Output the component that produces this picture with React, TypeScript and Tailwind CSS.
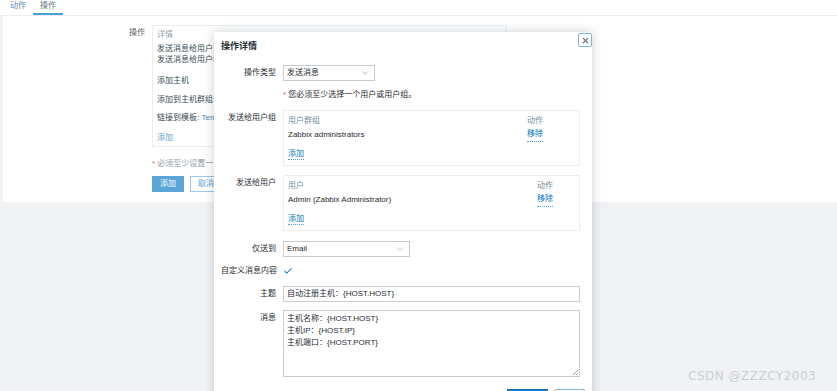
import { Check, ChevronDown, X } from "lucide-react";

const font = "font-['Liberation_Sans','Noto_Sans_CJK_SC',sans-serif]";

function Select({ value, width }: { value: string; width: string }) {
  return (
    <div
      className={`flex h-[16px] items-center justify-between border border-[#c6ccd1] bg-white pl-[3px] pr-[4px] ${width}`}
    >
      <span>{value}</span>
      <ChevronDown className="size-[10px] text-[#8a9299]" strokeWidth={1.5} />
    </div>
  );
}

function Row({
  label,
  children,
  top,
  className = "",
}: {
  label: string;
  children: React.ReactNode;
  top?: boolean;
  className?: string;
}) {
  return (
    <div
      className={`grid grid-cols-[55px_1fr] gap-x-[7px] leading-[12px] ${top ? "items-start" : "items-center"} ${className}`}
    >
      <div className={`whitespace-nowrap text-right ${top ? "pt-[2px]" : ""}`}>{label}</div>
      <div>{children}</div>
    </div>
  );
}

function Link({ children }: { children: React.ReactNode }) {
  return (
    <span className="w-fit border-b border-dotted border-[#5a9fd0] leading-[11px] text-[#0275b8]">
      {children}
    </span>
  );
}

function ListBox({ head, name, actionCol }: { head: string; name: string; actionCol: string }) {
  return (
    <div className="flex h-[56px] flex-col border border-[#ebeef0] px-[4px] pt-[4px]">
      <div className={`grid ${actionCol} leading-[12px] text-[#768d99]`}>
        <span>{head}</span>
        <span>动作</span>
      </div>
      <div className={`mt-[1px] grid ${actionCol} leading-[14px]`}>
        <span>{name}</span>
        <Link>移除</Link>
      </div>
      <div className="mt-[6px] flex">
        <Link>添加</Link>
      </div>
    </div>
  );
}

export default function App() {
  return (
    <div
      className={`relative flex h-[391px] w-[837px] flex-col overflow-hidden bg-[#f1f2f4] text-[8px] text-[#1f2c33] ${font}`}
    >
      {/* tabs */}
      <div className="flex h-[16px] items-end gap-[1px] border-b border-[#ebeef0] bg-white pl-[4px] leading-[12px]">
        <span className="px-[6px] pb-[3px] text-[#5b8db8]">动作</span>
        <span className="border-b-2 border-[#4a9fd8] px-[7px] pb-[1px] text-[#5f7585]">操作</span>
      </div>

      {/* form behind the dialog */}
      <div className="ml-[3px] h-[186px] bg-white pt-[9px] leading-[12px] text-[#3b4a53]">
        <div className="grid grid-cols-[142px_1fr] gap-x-[7px]">
          <div className="pt-[2px] text-right text-[#555f66]">操作</div>
          <div className="h-[122px] w-[355px] border border-[#ebeef0] px-[4px] pt-[3px]">
            <div className="text-[#9aa4ab]">详情</div>
            <div className="mt-[2px] leading-[11px]">发送消息给用户:</div>
            <div className="leading-[11px]">发送消息给用户群</div>
            <div className="mt-[10px]">添加主机</div>
            <div className="mt-[7px]">添加到主机群组:</div>
            <div className="mt-[6px]">
              链接到模板: <span className="text-[#4a7fa8]">Tem</span>
            </div>
            <div className="mt-[8px] text-[#5a9fd0]">添加</div>
          </div>
          <div />
          <div className="mt-[11px] text-[#8f9aa1]">
            <span className="text-[#e46a6a]">*</span> 必须至少设置一
          </div>
          <div />
          <div className="mt-[6px] flex gap-[6px]">
            <span className="flex h-[16px] w-[32px] items-center justify-center bg-[#5aa5d6] text-white">
              添加
            </span>
            <span className="flex h-[16px] w-[32px] items-center justify-center border border-[#9ec8e6] text-[#5a9fd0]">
              取消
            </span>
          </div>
        </div>
      </div>

      {/* modal dialog */}
      <div className="absolute top-[32px] left-[214px] h-[380px] w-[378px] bg-white pr-[12px] pl-[7px] shadow-[0_0_10px_rgba(20,40,60,0.22)]">
        <button className="absolute top-[1px] right-0 flex size-[14px] items-center justify-center rounded-[2px] border border-[#7fb6e2] bg-white">
          <X className="size-[9px] text-[#6d7880]" strokeWidth={3} />
        </button>
        <div className="pt-[8px] text-[9px] leading-[12px] font-bold">操作详情</div>

        <Row label="操作类型" className="mt-[13px]">
          <Select value="发送消息" width="w-[92px]" />
        </Row>
        <div className="mt-[8px] pl-[62px] leading-[12px]">
          <span className="text-[#e45959]">*</span> 您必须至少选择一个用户或用户组。
        </div>

        <Row label="发送给用户组" top className="mt-[9px]">
          <ListBox head="用户群组" name="Zabbix administrators" actionCol="grid-cols-[1fr_48px]" />
        </Row>
        <Row label="发送给用户" top className="mt-[9px]">
          <ListBox head="用户" name="Admin (Zabbix Administrator)" actionCol="grid-cols-[1fr_38px]" />
        </Row>

        <Row label="仅送到" className="mt-[10px]">
          <Select value="Email" width="w-[127px]" />
        </Row>
        <Row label="自定义消息内容" className="mt-[8px]">
          <Check className="size-[10px] text-[#1f7fc4]" strokeWidth={2.5} />
        </Row>
        <Row label="主题" className="mt-[9px]">
          <div className="flex h-[16px] items-center border border-[#c6ccd1] pl-[3px]">
            自动注册主机：{"{HOST.HOST}"}
          </div>
        </Row>
        <Row label="消息" top className="mt-[8px]">
          <div className="relative h-[67px] border border-[#c6ccd1] px-[3px] pt-[2px] leading-[12px]">
            <div>主机名称：{"{HOST.HOST}"}</div>
            <div>主机IP：{"{HOST.IP}"}</div>
            <div>主机端口：{"{HOST.PORT}"}</div>
            <svg className="absolute right-[1px] bottom-[1px]" width="6" height="6" viewBox="0 0 6 6">
              <path d="M6 1 L1 6 M6 4 L4 6" stroke="#7a848b" strokeWidth="0.8" />
            </svg>
          </div>
        </Row>

        <div className="mt-[12px] flex justify-end gap-[6px]">
          <span className="h-[16px] w-[41px] bg-[#1b75bb]" />
          <span className="-mr-[5px] h-[16px] w-[31px] rounded-[2px] border border-[#7fb6e2]" />
        </div>
      </div>

      {/* watermark */}
      <div className="absolute top-[367px] left-[688px] font-['DejaVu_Sans',sans-serif] text-[12px] tracking-[0.5px] text-[#cbced1]">
        CSDN @ZZZCY2003
      </div>
    </div>
  );
}
